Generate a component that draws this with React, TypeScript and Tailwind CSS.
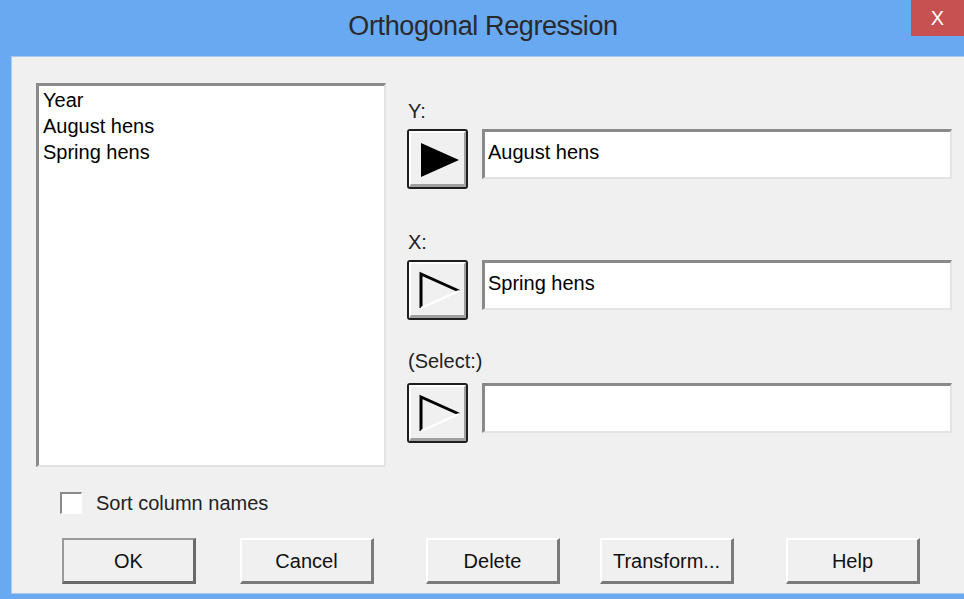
const FONT = { fontFamily: '"Liberation Sans", Arial, sans-serif' };

function PickButton({ filled }: { filled?: boolean }) {
  return (
    <div className="flex h-[60px] w-[61px] shrink-0 rounded-[3px] border-2 border-[#1e1e1e] bg-[#f0f0f0]">
      <div className="flex flex-1 border-t-2 border-l-2 border-r-2 border-b-[3px] border-t-white border-l-white border-r-[#a0a0a0] border-b-[#a0a0a0]">
        <svg width="53" height="51" viewBox="0 0 53 51" className="block">
          {filled ? (
            <polygon points="10,10 10,44 48,27" fill="#000" />
          ) : (
            <>
              <polyline points="10,44 10,10 48,27" fill="none" stroke="#000" strokeWidth="3" />
              <line x1="10" y1="44" x2="48" y2="27" stroke="#fff" strokeWidth="2" />
            </>
          )}
        </svg>
      </div>
    </div>
  );
}

function Field({ value }: { value?: string }) {
  return (
    <div className="h-[50px] flex-1 border-t-[3px] border-l-[3px] border-b-2 border-r-2 border-t-[#8a8a8a] border-l-[#8a8a8a] border-b-[#e3e3e3] border-r-[#e3e3e3] bg-white px-[3px] pt-[8px] text-[20px] leading-[24px] text-black">
      {value}
    </div>
  );
}

function VarSlot({
  label,
  value,
  filled,
  className = "",
  labelClass = "h-[30px]",
}: {
  label: string;
  value?: string;
  filled?: boolean;
  className?: string;
  labelClass?: string;
}) {
  return (
    <div className={`flex flex-col ${className}`}>
      <div className={`${labelClass} pl-[1px] text-[20px] leading-[24px] text-[#222]`}>{label}</div>
      <div className="flex items-start gap-[14px]">
        <PickButton filled={filled} />
        <Field value={value} />
      </div>
    </div>
  );
}

function DlgButton({ children, isDefault, className = "" }: { children: string; isDefault?: boolean; className?: string }) {
  return (
    <div
      className={`flex h-[46px] w-[134px] items-center justify-center border-t-2 border-l-2 border-r-[3px] border-b-[3px] text-[20px] text-[#111] ${
        isDefault
          ? "border-t-[#9a9a9a] border-l-[#9a9a9a] border-r-[#6a6a6a] border-b-[#6a6a6a]"
          : "border-t-white border-l-white border-r-[#7a7a7a] border-b-[#7a7a7a]"
      } ${className}`}
    >
      {children}
    </div>
  );
}

export default function App() {
  const columns = ["Year", "August hens", "Spring hens"];

  return (
    <div className="h-[599px] w-[964px] overflow-hidden bg-[#68a9f2] pl-[2px]" style={FONT}>
      {/* title bar */}
      <div className="relative flex h-[56px] items-center justify-center">
        <span className="pb-[4px] text-[27px] tracking-[-0.4px] text-[#2a2a2a]">Orthogonal Regression</span>
        <div className="absolute top-0 right-0 flex h-[36px] w-[53px] items-center justify-center bg-[#c75050] text-[20px] text-white">
          X
        </div>
      </div>

      {/* client area */}
      <div className="ml-[9px] flex h-[538px] flex-col border-t border-l border-b border-[#a9c9ee] bg-[#f0f0f0]">
        <div className="flex gap-[21px] pt-[26px] pl-[24px] pr-[12px]">
          <div className="flex flex-col">
            <div className="h-[384px] w-[350px] border-t-[3px] border-l-[3px] border-b-2 border-r-2 border-t-[#8a8a8a] border-l-[#8a8a8a] border-b-[#e3e3e3] border-r-[#e3e3e3] bg-white px-[4px] pt-[1px]">
              {columns.map((c) => (
                <div key={c} className="text-[20px] leading-[26px] text-black">
                  {c}
                </div>
              ))}
            </div>
            <label className="mt-[21px] ml-[24px] flex items-center gap-[14px]">
              <span className="h-[22px] w-[22px] border-t-2 border-l-2 border-b border-r border-t-[#8a8a8a] border-l-[#8a8a8a] border-b-white border-r-white bg-white" />
              <span className="text-[20px] text-[#222]">Sort column names</span>
            </label>
          </div>

          <div className="flex flex-1 flex-col pt-[16px]">
            <VarSlot label="Y:" value="August hens" filled />
            <VarSlot label="X:" value="Spring hens" className="mt-[41px]" />
            <VarSlot label="(Select:)" className="mt-[29px]" labelClass="h-[34px]" />
          </div>
        </div>

        <div className="mt-[20px] flex pl-[50px]">
          <DlgButton isDefault>OK</DlgButton>
          <DlgButton className="ml-[44px]">Cancel</DlgButton>
          <DlgButton className="ml-[52px]">Delete</DlgButton>
          <DlgButton className="ml-[40px]">Transform...</DlgButton>
          <DlgButton className="ml-[52px]">Help</DlgButton>
        </div>
      </div>
    </div>
  );
}
